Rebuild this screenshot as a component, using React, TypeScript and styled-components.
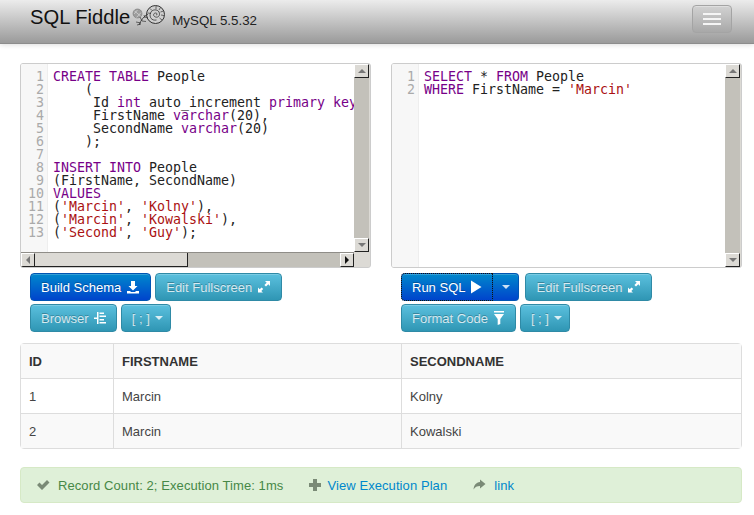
import React from 'react';
import styled, { createGlobalStyle } from 'styled-components';

const GlobalStyle = createGlobalStyle`
  html, body {
    margin: 0;
    padding: 0;
    background: #fff;
  }
  body {
    font-family: "Liberation Sans", Arial, sans-serif;
    font-size: 13px;
    color: #333;
    overflow: hidden;
  }
`;

const Page = styled.div`
  width: 754px;
  height: 515px;
  overflow: hidden;
`;

const Header = styled.header`
  height: 44px;
  box-sizing: border-box;
  display: flex;
  align-items: flex-start;
  padding: 0 22px 0 30px;
  background: linear-gradient(to bottom, #ececec, #9a9a9a);
  border-bottom: 1px solid #8c8c8c;
  box-shadow: 0 1px 5px rgba(0, 0, 0, 0.14);
`;

const Brand = styled.div`
  font-size: 20.2px;
  color: #111;
  line-height: 35px;
`;

const Logo = styled.svg`
  width: 34px;
  height: 21px;
  margin: 5px 0 0 1px;
`;

const DbName = styled.div`
  font-size: 13.33px;
  color: #222;
  margin: 13px 0 0 7px;
  flex: 1;
`;

const MenuButton = styled.button`
  width: 40px;
  height: 28px;
  margin-top: 5px;
  padding: 0;
  display: flex;
  flex-direction: column;
  align-items: center;
  justify-content: center;
  gap: 3px;
  border: 1px solid #a4a4a4;
  border-radius: 4px;
  background: linear-gradient(to bottom, #d2d2d2, #a8a8a8);
  box-shadow: inset 0 1px 0 rgba(255, 255, 255, 0.3);
`;

const MenuBar = styled.span`
  width: 18px;
  height: 2px;
  background: #f5f5f5;
`;

const Panels = styled.div`
  display: grid;
  grid-template-columns: 351px 351px;
  gap: 20px;
  margin: 19px 0 0 20px;
`;

const Column = styled.section`
  min-width: 0;
`;

const Editor = styled.div<{ $horizontal?: boolean }>`
  height: 203px;
  border: 1px solid #ccc;
  border-radius: 3px;
  display: grid;
  grid-template-columns: minmax(0, 1fr) 16px;
  grid-template-rows: minmax(0, 1fr) ${p => (p.$horizontal ? '15px' : '0')};
  background: #dcdad5;
  overflow: hidden;
`;

const CodeArea = styled.div`
  display: flex;
  min-width: 0;
  background: #fff;
  overflow: hidden;
`;

const Gutter = styled.div`
  width: 27px;
  flex: none;
  box-sizing: border-box;
  padding: 6px 3px 0 0;
  background: #f7f7f7;
  border-right: 1px solid #eee;
  color: #aaa;
  text-align: right;
  font: 13.29px/13px "DejaVu Sans Mono", monospace;
  white-space: pre;
`;

const Code = styled.pre`
  margin: 0;
  padding: 6px 0 0 5px;
  color: #222;
  font: 13.29px/13px "DejaVu Sans Mono", monospace;
  overflow: hidden;
  white-space: pre;
`;

const Kw = styled.span`
  color: #708;
`;

const Str = styled.span`
  color: #a11;
`;

const VTrack = styled.div`
  display: flex;
  flex-direction: column;
  justify-content: space-between;
  width: 15px;
  background: #c3c1ba;
`;

const HTrack = styled.div`
  display: flex;
  background: #c3c1ba;
  height: 14px;
  border-top: 1px solid #8f8d88;
`;

const HThumb = styled.div`
  flex: 1;
  max-width: 274px;
  box-sizing: border-box;
  background: #dcdad5;
  border-right: 1px solid #222;
  border-bottom: 1px solid #222;
`;

const HGap = styled.div`
  flex: 1;
`;

const ArrowBox = styled.div<{ $wide?: boolean }>`
  width: ${p => (p.$wide ? '15px' : '14px')};
  height: 14px;
  flex: none;
  box-sizing: border-box;
  background: #dcdad5;
  border-top: 1px solid #fff;
  border-left: 1px solid #fff;
  border-right: 1px solid #222;
  border-bottom: 1px solid #222;
  display: flex;
  align-items: center;
  justify-content: center;
`;

const Arrow = styled.span<{ $dir: string; $color: string }>`
  width: 0;
  height: 0;
  border-style: solid;
  border-color: transparent;
  ${p =>
    p.$dir === 'up' &&
    `border-width: 0 4px 4px 4px; border-bottom-color: ${p.$color};`}
  ${p =>
    p.$dir === 'down' &&
    `border-width: 4px 4px 0 4px; border-top-color: ${p.$color};`}
  ${p =>
    p.$dir === 'left' &&
    `border-width: 4px 4px 4px 0; border-right-color: ${p.$color};`}
  ${p =>
    p.$dir === 'right' &&
    `border-width: 4px 0 4px 4px; border-left-color: ${p.$color};`}
`;

const Corner = styled.div`
  background: #dcdad5;
`;

const Toolbar = styled.div<{ $top?: number }>`
  display: flex;
  gap: 4px;
  margin: ${p => p.$top || 3}px 0 0 10px;
`;

const Button = styled.button<{ $primary?: boolean }>`
  height: 28px;
  box-sizing: border-box;
  padding: 0 10px;
  display: inline-flex;
  align-items: center;
  gap: 5px;
  border: 1px solid ${p => (p.$primary ? '#0055b3' : '#2f8aa6')};
  border-radius: 4px;
  font-family: "Liberation Sans", Arial, sans-serif;
  font-size: 13px;
  color: ${p => (p.$primary ? '#fff' : 'rgba(255, 255, 255, 0.8)')};
  text-shadow: 0 -1px 0 rgba(0, 0, 0, 0.25);
  background: ${p =>
    p.$primary
      ? 'linear-gradient(to bottom, #0088cc, #0044cc)'
      : 'linear-gradient(to bottom, #5bc0de, #2f96b4)'};
  box-shadow: inset 0 1px 0 rgba(255, 255, 255, 0.2);
`;

const DelimiterButton = styled(Button)`
  padding-right: 7px;
`;

const SplitMain = styled(Button)`
  border-radius: 4px 0 0 4px;
  outline: 1px dotted #111;
  outline-offset: -1px;
`;

const SplitCaret = styled(Button)`
  width: 26px;
  padding: 0;
  justify-content: center;
  border-left: 0;
  border-radius: 0 4px 4px 0;
`;

const Split = styled.div`
  display: flex;
  margin-right: 2px;
`;

const Caret = styled.span`
  width: 0;
  height: 0;
  border-style: solid;
  border-width: 4px 4px 0 4px;
  border-color: rgba(255, 255, 255, 0.8) transparent transparent;
`;

const ResultTable = styled.table`
  width: 722px;
  margin: 11px 0 0 20px;
  border-collapse: separate;
  border-spacing: 0;
  border: 1px solid #ddd;
  border-radius: 4px;
  table-layout: fixed;
`;

const Th = styled.th<{ $first?: boolean }>`
  height: 34px;
  box-sizing: border-box;
  padding: 0 8px;
  background: #f9f9f9;
  text-align: left;
  font-size: 13px;
  color: #333;
  border-left: ${p => (p.$first ? '0' : '1px solid #ddd')};
`;

const Td = styled.td<{ $first?: boolean; $striped?: boolean }>`
  height: 35px;
  box-sizing: border-box;
  padding: 0 8px;
  font-size: 13px;
  color: #444;
  background: ${p => (p.$striped ? '#f9f9f9' : '#fff')};
  border-top: 1px solid #ddd;
  border-left: ${p => (p.$first ? '0' : '1px solid #ddd')};
`;

const StatusBar = styled.div`
  width: 722px;
  height: 36px;
  box-sizing: border-box;
  margin: 18px 0 0 20px;
  padding: 0 15px;
  display: flex;
  align-items: center;
  background: #dff0d8;
  border: 1px solid #d6e9c6;
  border-radius: 4px;
  color: #468847;
  font-size: 13px;
  letter-spacing: 0.08px;
`;

const StatusText = styled.span`
  margin: 0 25px 0 8px;
`;

const StatusLink = styled.a<{ $gap: number }>`
  color: #0088cc;
  margin: 0 25px 0 ${p => p.$gap}px;
`;

const Icon = styled.svg<{ $color?: string; $width?: number }>`
  width: ${p => p.$width || 14}px;
  height: 14px;
  flex: none;
  fill: ${p => p.$color || '#fff'};
`;

const FernLogo = () => (
  <Logo viewBox="0 0 34 21" fill="none" stroke="#333">
    <circle cx="24.500" cy="9.500" r="9" fill="#cfcfcf" strokeWidth="1" />
    <path d="M25 10c1.500 0 1.500-2-.500-2s-3 3 0 4 5-2 3.500-5-7-3-8.500 1 1 8 6 7" strokeWidth="0.8" />
    <path
      d="M25 1v3M29.500 2.500 28 5M32.500 6l-3 1M33 10.500l-3-.500M31 15l-2.500-2M19 3.500l2 2M17 8l3 .500"
      strokeWidth="0.7"
    />
    <circle cx="6.500" cy="8.500" r="4.500" fill="#9c9c9c" stroke="#777" strokeWidth="0.6" />
    <path d="M3.500 6l6 5M3 9l3.500-4M5.500 12.500l4.500-5" stroke="#e4e4e4" strokeWidth="0.6" />
    <path d="M8 20c2-5 5-9 9-11" strokeWidth="0.9" />
    <path d="M5 17l5 1M6 20l4-1M9 12l2 4M13 10l1 3M11 16l4 .500M14 12l3 .500" strokeWidth="0.7" />
  </Logo>
);

const DownloadIcon = () => (
  <Icon viewBox="0 0 14 14">
    <path d="M5 1h4v5h2.500L7 10.500 2.500 6H5zM1 11h3l1 1h4l1-1h3v2.500H1z" />
  </Icon>
);

const ResizeIcon = () => (
  <Icon viewBox="0 0 14 14">
    <path d="M8 1H13V6L11.300 4.300 9 6.600 7.400 5 9.700 2.700zM4.600 7.400 6.200 9 4.300 10.900 6 12.600H1V7.600L2.700 9.300z" />
  </Icon>
);

const TreeIcon = () => (
  <Icon viewBox="0 0 12 14" $width={12}>
    <path d="M3 1h1.500v12H3V8H0V6.500h3zM5.500 1.500H10V3H5.500zM5.500 4.500H12V6H5.500zM5.500 8H10v1.500H5.500zM5.500 11H12v1.500H5.500z" />
  </Icon>
);

const PlayIcon = () => (
  <Icon viewBox="0 0 12 14" $width={12}>
    <path d="M1 0.500 11.500 7 1 13.500z" />
  </Icon>
);

const FilterIcon = () => (
  <Icon viewBox="0 0 12 14" $width={12}>
    <path d="M1 0h10v1.500H1zM1 3h10L7.300 8v5l-2.600 1V8z" />
  </Icon>
);

const CheckIcon = () => (
  <Icon viewBox="0 0 14 14" $color="#7a8a76">
    <path d="M1 7l2.500-2.500L6 7l5-5 2.500 2.500L6 12z" />
  </Icon>
);

const PlusIcon = () => (
  <Icon viewBox="0 0 14 14" $color="#7a8a76">
    <path d="M5 1h4v4h4v4H9v4H5V9H1V5h4z" />
  </Icon>
);

const ShareIcon = () => (
  <Icon viewBox="0 0 14 14" $color="#7a8a76">
    <path d="M8 1.500 13.500 6 8 10.500V8C5 8 3 9 1.500 11.500 2 7 4 4.500 8 4z" />
  </Icon>
);

const schemaLines = 13;
const queryLines = 2;

const lineNumbers = (n: number) =>
  Array.from({ length: n }, (_, i) => i + 1).join('\n');

const rows = [
  { id: 1, first: 'Marcin', second: 'Kolny' },
  { id: 2, first: 'Marcin', second: 'Kowalski' },
];

export default function App() {
  return (
    <Page>
      <GlobalStyle />
      <Header>
        <Brand>SQL Fiddle</Brand>
        <FernLogo />
        <DbName>MySQL 5.5.32</DbName>
        <MenuButton>
          <MenuBar />
          <MenuBar />
          <MenuBar />
        </MenuButton>
      </Header>

      <Panels>
        <Column>
          <Editor $horizontal>
            <CodeArea>
              <Gutter>{lineNumbers(schemaLines)}</Gutter>
              <Code>
                <Kw>CREATE</Kw> <Kw>TABLE</Kw> People{'\n'}
                {'    ('}{'\n'}
                {'     Id '}<Kw>int</Kw> auto_increment <Kw>primary</Kw> <Kw>key</Kw>,{'\n'}
                {'     FirstName '}<Kw>varchar</Kw>(20),{'\n'}
                {'     SecondName '}<Kw>varchar</Kw>(20){'\n'}
                {'    );'}{'\n'}
                {'\n'}
                <Kw>INSERT</Kw> <Kw>INTO</Kw> People{'\n'}
                (FirstName, SecondName){'\n'}
                <Kw>VALUES</Kw>{'\n'}
                (<Str>'Marcin'</Str>, <Str>'Kolny'</Str>),{'\n'}
                (<Str>'Marcin'</Str>, <Str>'Kowalski'</Str>),{'\n'}
                (<Str>'Second'</Str>, <Str>'Guy'</Str>);
              </Code>
            </CodeArea>
            <VTrack>
              <ArrowBox $wide><Arrow $dir="up" $color="#777" /></ArrowBox>
              <ArrowBox $wide><Arrow $dir="down" $color="#777" /></ArrowBox>
            </VTrack>
            <HTrack>
              <ArrowBox><Arrow $dir="left" $color="#777" /></ArrowBox>
              <HThumb />
              <HGap />
              <ArrowBox><Arrow $dir="right" $color="#111" /></ArrowBox>
            </HTrack>
            <Corner />
          </Editor>
          <Toolbar $top={5}>
            <Button $primary>Build Schema <DownloadIcon /></Button>
            <Button>Edit Fullscreen <ResizeIcon /></Button>
          </Toolbar>
          <Toolbar>
            <Button>Browser <TreeIcon /></Button>
            <DelimiterButton>[ ; ]<Caret /></DelimiterButton>
          </Toolbar>
        </Column>

        <Column>
          <Editor>
            <CodeArea>
              <Gutter>{lineNumbers(queryLines)}</Gutter>
              <Code>
                <Kw>SELECT</Kw> * <Kw>FROM</Kw> People{'\n'}
                <Kw>WHERE</Kw> FirstName = <Str>'Marcin'</Str>
              </Code>
            </CodeArea>
            <VTrack>
              <ArrowBox $wide><Arrow $dir="up" $color="#777" /></ArrowBox>
              <ArrowBox $wide><Arrow $dir="down" $color="#777" /></ArrowBox>
            </VTrack>
          </Editor>
          <Toolbar $top={5}>
            <Split>
              <SplitMain $primary>Run SQL <PlayIcon /></SplitMain>
              <SplitCaret $primary><Caret /></SplitCaret>
            </Split>
            <Button>Edit Fullscreen <ResizeIcon /></Button>
          </Toolbar>
          <Toolbar>
            <Button>Format Code <FilterIcon /></Button>
            <DelimiterButton>[ ; ]<Caret /></DelimiterButton>
          </Toolbar>
        </Column>
      </Panels>

      <ResultTable>
        <colgroup>
          <col width="92" />
          <col width="288" />
          <col />
        </colgroup>
        <thead>
          <tr>
            <Th $first>ID</Th>
            <Th>FIRSTNAME</Th>
            <Th>SECONDNAME</Th>
          </tr>
        </thead>
        <tbody>
          {rows.map((row, i) => (
            <tr key={row.id}>
              <Td $first $striped={i % 2 === 1}>{row.id}</Td>
              <Td $striped={i % 2 === 1}>{row.first}</Td>
              <Td $striped={i % 2 === 1}>{row.second}</Td>
            </tr>
          ))}
        </tbody>
      </ResultTable>

      <StatusBar>
        <CheckIcon />
        <StatusText>Record Count: 2; Execution Time: 1ms</StatusText>
        <PlusIcon />
        <StatusLink $gap={5}>View Execution Plan</StatusLink>
        <ShareIcon />
        <StatusLink $gap={8}>link</StatusLink>
      </StatusBar>
    </Page>
  );
}
